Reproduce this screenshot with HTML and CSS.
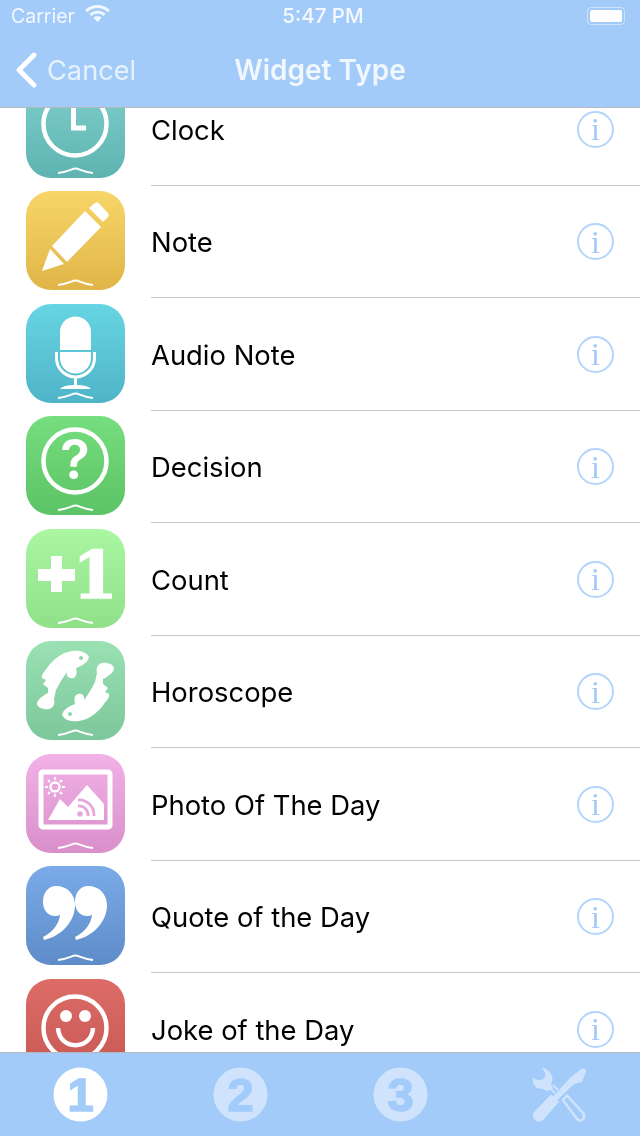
FILE: index.html
```html
<!DOCTYPE html>
<html lang="en">
<head>
<meta charset="utf-8">
<title>Widget Type</title>
<link rel="stylesheet" href="styles.css">
</head>
<body>
<svg class="defs" width="0" height="0" aria-hidden="true">
  <symbol id="swoosh" viewBox="0 0 99 99"><path d="M32 94C42 93 46 89.500 49.500 89.500C53 89.500 57 93 67 94" fill="none" stroke="#fff" stroke-width="2"/></symbol>
</svg>
<div class="screen">
  <header class="top">
    <div class="status">
      <div class="status-left">
        <span>Carrier</span>
        <svg class="wifi" viewBox="0 0 26 20"><path d="M1 7.500C8 1 18 1 25 7.500" fill="none" stroke="#fff" stroke-width="3"/><path d="M5.500 11.500C10 7.500 16 7.500 20.500 11.500" fill="none" stroke="#fff" stroke-width="3"/><path d="M8.700 14.500C11 12.500 15 12.500 17.300 14.500L13 19Z" fill="#fff"/></svg>
      </div>
      <span class="clock-time">5:47 PM</span>
      <div class="battery"><div class="battery-fill"></div></div>
    </div>
    <nav class="navbar">
      <div class="back">
        <svg class="chevron" viewBox="0 0 22 36"><path d="M19 3L4 18L19 33" fill="none" stroke="#fff" stroke-width="4.800" stroke-linecap="round" stroke-linejoin="round"/></svg>
        <span>Cancel</span>
      </div>
      <h1>Widget Type</h1>
    </nav>
  </header>
  <main class="list">
    <div class="rows">
      <div class="row">
        <div class="icon clock">
          <svg viewBox="0 0 99 99"><circle cx="49" cy="45" r="31.500" fill="none" stroke="#fff" stroke-width="4.500"/><path d="M47.500 29V49H60" fill="none" stroke="#fff" stroke-width="5"/><use href="#swoosh"/></svg>
        </div>
        <div class="row-body"><span class="label">Clock</span><span class="info">i</span></div>
      </div>
      <div class="row">
        <div class="icon note">
          <svg viewBox="0 0 99 99"><path d="M16 80L24 58L38 73Z" fill="#fff"/><path d="M26 55L59 20L75 36L41 71Z" fill="#fff"/><path d="M63 17L69 12Q71 10.500 73 12.500L82 22Q83.500 24 82 26L77 31Z" fill="#fff"/><use href="#swoosh"/></svg>
        </div>
        <div class="row-body"><span class="label">Note</span><span class="info">i</span></div>
      </div>
      <div class="row">
        <div class="icon mic">
          <svg viewBox="0 0 99 99"><path d="M34 46V28A15.500 15.500 0 0 1 65 28V46Z" fill="#fff"/><path d="M34 48H65V54A15.500 15.500 0 0 1 34 54Z" fill="#fff"/><path d="M30.500 48V54A19 19 0 0 0 68.500 54V48M49.500 72V82" fill="none" stroke="#fff" stroke-width="3"/><path d="M34 85Q37 81 49.500 81Q62 81 65 85Z" fill="#fff"/><use href="#swoosh"/></svg>
        </div>
        <div class="row-body"><span class="label">Audio Note</span><span class="info">i</span></div>
      </div>
      <div class="row">
        <div class="icon decision">
          <svg viewBox="0 0 99 99"><circle cx="49" cy="45" r="31.500" fill="none" stroke="#fff" stroke-width="4.500"/><text class="glyph-q" x="49" y="63">?</text><use href="#swoosh"/></svg>
        </div>
        <div class="row-body"><span class="label">Decision</span><span class="info">i</span></div>
      </div>
      <div class="row">
        <div class="icon count">
          <svg viewBox="0 0 99 99"><path d="M25 27H36V40H49V52H36V63H25V52H12V40H25Z" fill="#fff"/><text class="glyph-one" x="69" y="69">1</text><use href="#swoosh"/></svg>
        </div>
        <div class="row-body"><span class="label">Count</span><span class="info">i</span></div>
      </div>
      <div class="row">
        <div class="icon horoscope">
          <svg viewBox="0 0 99 99"><g id="fish"><path d="M63 16C60 10 52 9 46 10C37 11 27 18 21 27C18 31 15 34 16 37L20 39L17 43L22 47L22 52C18 54 12 58 11 62C11 67 18 69 23 68C28 67 29 62 28 58L30 49C34 41 38 35 41 31C40 35 43 38 47 37C51 36 51 31 50 27C55 25 62 22 63 16Z" fill="#fff"/><circle cx="55" cy="17" r="2" fill="#8fd7aa"/></g><use href="#fish" transform="rotate(180 49.500 45)"/><use href="#swoosh"/></svg>
        </div>
        <div class="row-body"><span class="label">Horoscope</span><span class="info">i</span></div>
      </div>
      <div class="row">
        <div class="icon photo">
          <svg viewBox="0 0 99 99"><rect x="15" y="18" width="69" height="55" rx="2" fill="none" stroke="#fff" stroke-width="5"/><circle cx="29" cy="33" r="4.500" fill="none" stroke="#fff" stroke-width="2.500"/><path d="M29 23V26M29 40V43M19 33H22M36 33H39M22 26L24 28M34 38L36 40M22 40L24 38M34 28L36 26" stroke="#fff" stroke-width="2.200"/><path d="M22 66L34 45L42 53L61 31L78 50V66Z" fill="#fff"/><circle cx="54" cy="60" r="2.800" fill="#e7a7dc"/><path d="M52 52A9 9 0 0 1 62 62M52 46A15 15 0 0 1 68 62" fill="none" stroke="#e7a7dc" stroke-width="2.800"/><use href="#swoosh"/></svg>
        </div>
        <div class="row-body"><span class="label">Photo Of The Day</span><span class="info">i</span></div>
      </div>
      <div class="row">
        <div class="icon quote">
          <svg viewBox="0 0 99 99"><g id="comma"><path d="M30 20C41 20 49 28 49 39C49 55 36 70 18 74L17 71C27 66 33 58 34 49C32 50 30 50 29 50C22 50 17 44 17 36C17 27 22 20 30 20Z" fill="#fff"/></g><use href="#comma" x="32"/><use href="#swoosh"/></svg>
        </div>
        <div class="row-body"><span class="label">Quote of the Day</span><span class="info">i</span></div>
      </div>
      <div class="row">
        <div class="icon joke">
          <svg viewBox="0 0 99 99"><circle cx="49" cy="49" r="31.500" fill="none" stroke="#fff" stroke-width="4.500"/><circle cx="40" cy="37" r="6" fill="#fff"/><circle cx="59" cy="37" r="6" fill="#fff"/><path d="M32 49C33 72 66 72 67 49" fill="none" stroke="#fff" stroke-width="4.500"/><use href="#swoosh"/></svg>
        </div>
        <div class="row-body"><span class="label">Joke of the Day</span><span class="info">i</span></div>
      </div>
    </div>
  </main>
  <footer class="tabbar">
    <div class="tab">
      <svg class="tab-icon" viewBox="0 0 56 56"><circle class="disc" cx="28" cy="28" r="27.500"/><text class="tab-digit" x="28" y="45">1</text></svg>
    </div>
    <div class="tab inactive">
      <svg class="tab-icon" viewBox="0 0 56 56"><circle class="disc" cx="28" cy="28" r="27.500"/><text class="tab-digit" x="28" y="45">2</text></svg>
    </div>
    <div class="tab inactive">
      <svg class="tab-icon" viewBox="0 0 56 56"><circle class="disc" cx="28" cy="28" r="27.500"/><text class="tab-digit" x="28" y="45">3</text></svg>
    </div>
    <div class="tab inactive">
      <svg class="tool-icon" viewBox="0 0 80 70"><path class="disc" d="M51 17L62 8.500L66.500 10L62 22L54 24L37.500 40L39 42L23 60C20 63 15 62 13.500 58C12.500 55 13 53 15 51L31 34.500L33 36.500Z"/><path class="disc" d="M13 18C12 26 17 29 23 29L27 31L33 28.500L31 24C34 19 33 12 22 7L25 13C26 17 24 20 20 20C17 20 15 19 13 18Z"/><path class="tool-line" d="M29 27L35 33M33 25L38 30"/><path class="tool-strip" d="M43 40L47 35.500L63 53C65 56 64 59 62 60C60 61 58 60 57 59Z"/></svg>
    </div>
  </footer>
</div>
</body>
</html>
```
FILE: styles.css
```css
* { box-sizing: border-box; }
html, body { margin: 0; height: 100%; }
body { background: #fff; font-family: Inter, "Liberation Sans", sans-serif; }
.defs { display: block; height: 0; }
.screen { display: flex; flex-direction: column; width: 640px; height: 1136px; overflow: hidden; filter: blur(.4px); }

.top { height: 108px; flex: none; background: #a2cbfa; border-bottom: 1px solid #b4b9c0; color: #fff; }
.status { display: flex; align-items: center; justify-content: space-between; height: 31px; padding: 0 15px 0 11px; position: relative; font-size: 19.5px; }
.status-left { display: flex; align-items: center; gap: 10px; opacity: .85; }
.wifi { width: 25px; height: 19px; margin-top: -4px; }
.clock-time { position: absolute; left: 0; right: 0; text-align: center; font-size: 20.5px; font-weight: 500; padding-left: 6px; opacity: .9; }
.battery { width: 38px; height: 18px; padding: 2px; border: 1.5px solid rgba(255,255,255,.45); border-radius: 4px; }
.battery-fill { height: 100%; background: #fff; border-radius: 2px; }

.navbar { position: relative; display: flex; align-items: center; height: 77px; padding-top: 1px; }
.back { display: flex; align-items: center; gap: 10px; padding-left: 15px; font-size: 27.2px; color: rgba(255,255,255,.75); }
.chevron { width: 22px; height: 36px; }
.navbar h1 { position: absolute; left: 0; right: 0; margin: 0; text-align: center; font-size: 28px; font-weight: 600; color: rgba(255,255,255,.85); }

.list { flex: 1; min-height: 0; overflow: hidden; }
.rows { margin-top: -35px; }
.row { display: flex; height: 112.5px; padding-left: 26px; }
.icon { flex: none; width: 99px; height: 99px; margin-top: 5.5px; border-radius: 25px; overflow: hidden; }
.icon svg { display: block; width: 100%; height: 100%; }
.row-body { flex: 1; display: flex; align-items: center; justify-content: space-between; margin-left: 26px; padding-right: 26px; border-bottom: 1px solid #c8c8cc; }
.label { margin-top: 2px; font-size: 27.4px; color: #000; }
.info { display: flex; align-items: center; justify-content: center; width: 37px; height: 37px; margin-top: 1px; border: 2px solid #b4d5fb; border-radius: 50%; font-family: "Liberation Serif", serif; font-size: 32px; line-height: 1; color: #a0c8f8; }

.clock { background: linear-gradient(#7fd0ca, #5eb3b1); }
.note { background: linear-gradient(#f8d568, #e0b548); }
.mic { background: linear-gradient(#67d5e3, #4fb4c8); }
.decision { background: linear-gradient(#76de7e, #5cc366); }
.count { background: linear-gradient(#aaf6a2, #90e08a); }
.horoscope { background: linear-gradient(#9ae1b3, #7cc79b); }
.photo { background: linear-gradient(#f1b2e6, #d98fca); }
.quote { background: linear-gradient(#7aaae8, #5e8cc8); }
.joke { background: linear-gradient(#dd6c67, #c65753); }

.glyph-q { font-family: Inter, "Liberation Sans", sans-serif; font-weight: 600; font-size: 55px; text-anchor: middle; fill: #fff; }
.glyph-one { font-family: "DejaVu Serif", serif; font-weight: 700; font-size: 65px; text-anchor: middle; fill: #fff; stroke: #fff; stroke-width: 1.5px; }

.tabbar { flex: none; display: flex; height: 84px; background: #a2cbfa; border-top: 1px solid #b4b9c0; }
.tab { flex: 1; display: flex; align-items: center; justify-content: center; }
.tab-icon { width: 55px; height: 55px; }
.tool-icon { width: 80px; height: 70px; }
.disc { fill: #fff; }
.inactive .disc { fill: #cfe4fc; }
.tab-digit { font-family: "Liberation Sans", sans-serif; font-weight: 700; font-size: 48px; text-anchor: middle; fill: #a2cbfa; stroke: #a2cbfa; stroke-width: 1.5px; }
.tool-line { fill: none; stroke: #cfe4fc; stroke-width: 2px; }
.tool-strip { fill: none; stroke: #cfe4fc; stroke-width: 2.5px; }
```
